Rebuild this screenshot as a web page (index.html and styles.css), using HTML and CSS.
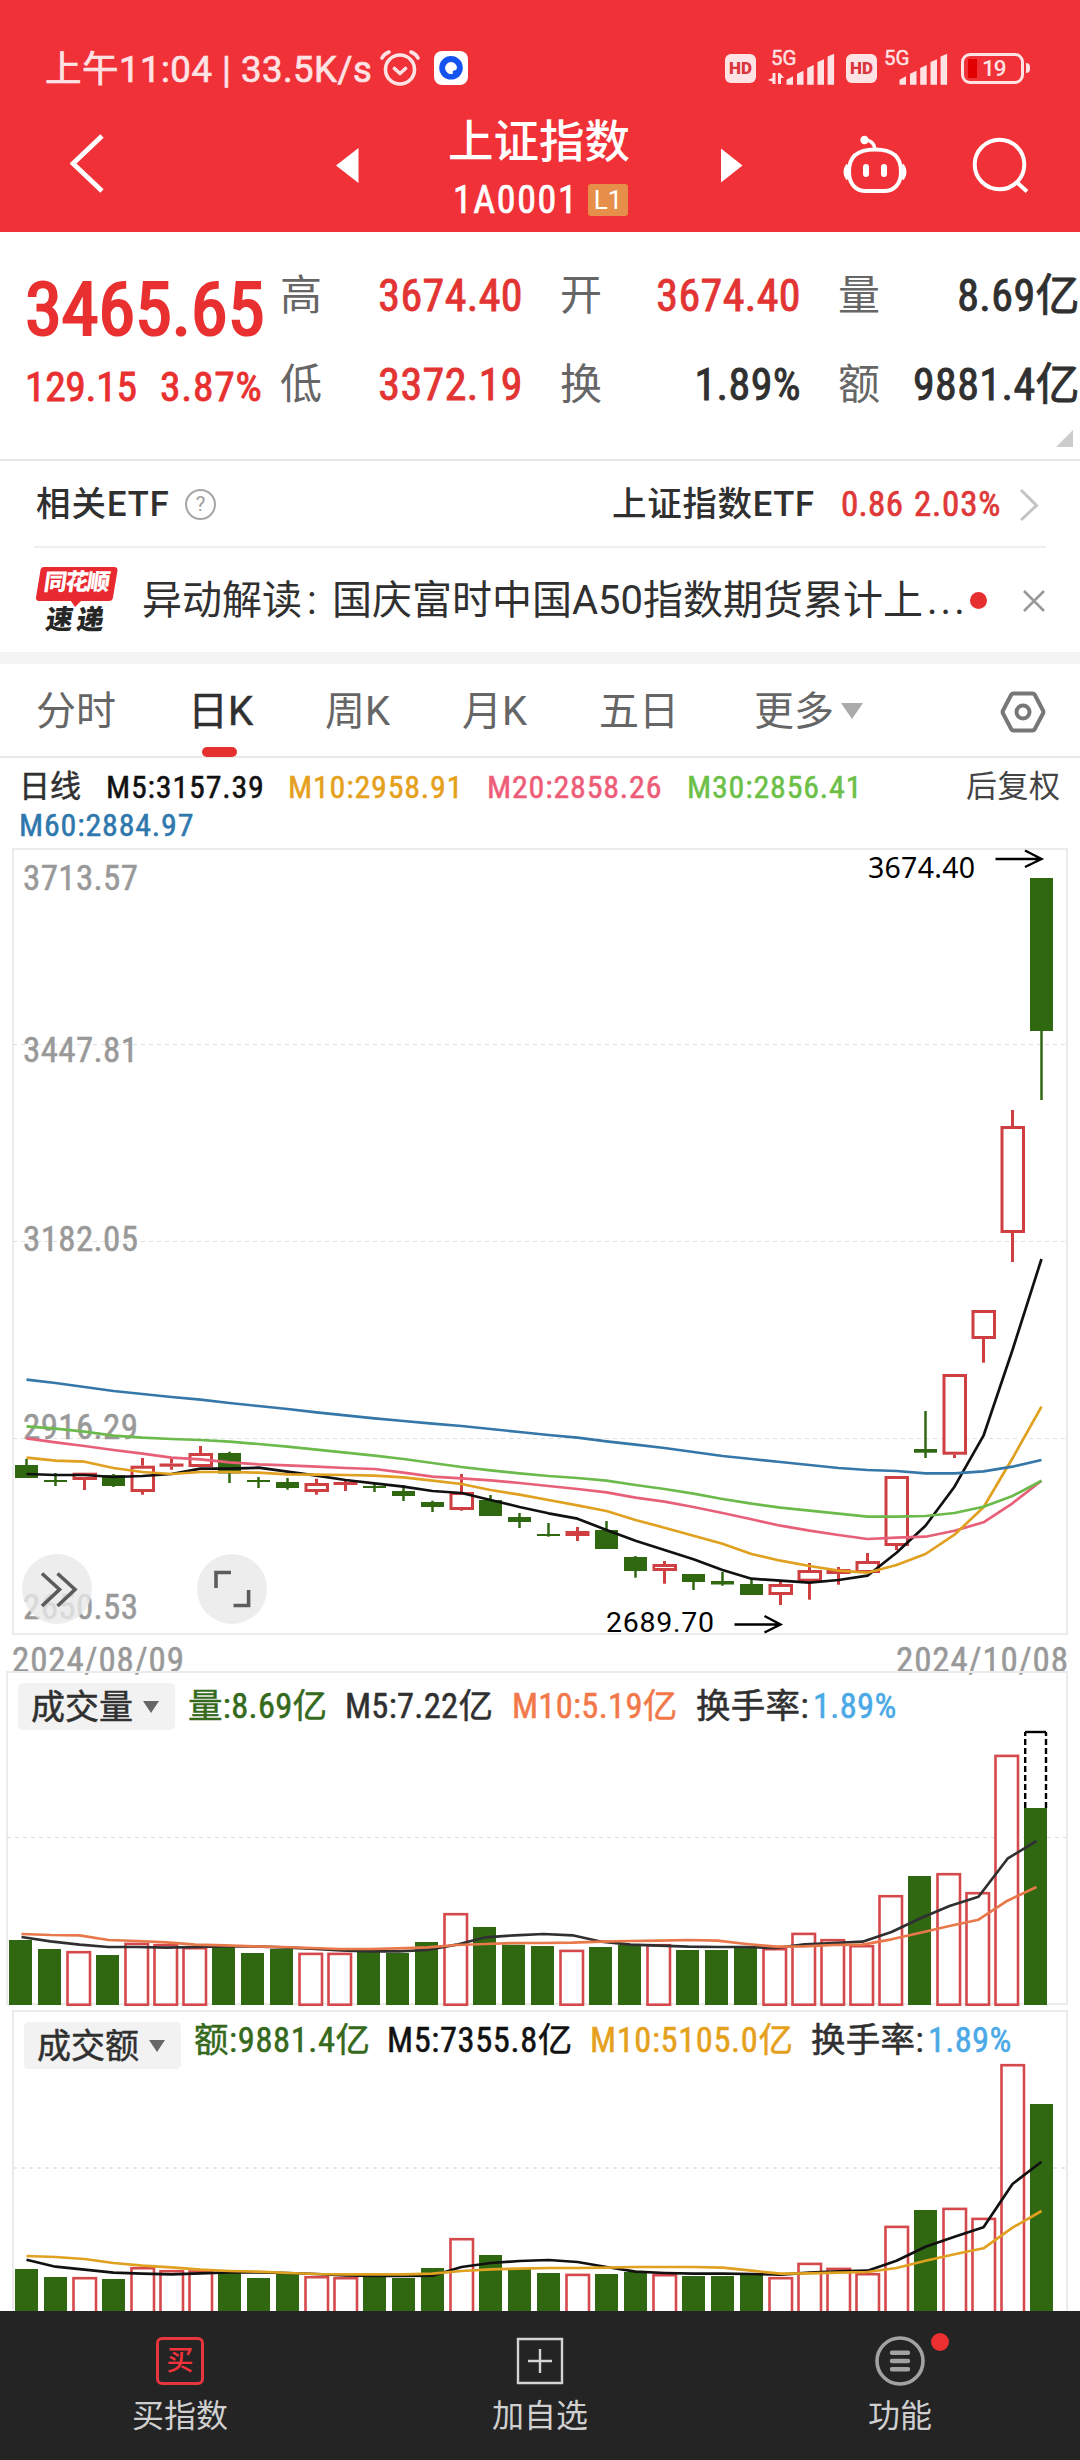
FILE: index.html
```html
<!DOCTYPE html>
<html lang="zh-CN">
<head>
<meta charset="utf-8">
<title>上证指数</title>
<link rel="stylesheet" href="styles.css">
</head>
<body>
<header class="top">
  <div class="status">
    <span class="clock">上午11:04 | 33.5K/s</span>
    <svg class="status-left" width="92" height="40" viewBox="378 50 92 40" fill="none">
      <g stroke="#ffe3e4" stroke-width="3.6" stroke-linecap="round" stroke-linejoin="round">
        <circle cx="400" cy="69.5" r="14.5"/>
        <path d="M394.500 68.500l5.500 5 5.500-5M382 58q2-4 7-6M418 58q-2-4-7-6"/>
      </g>
      <rect x="434" y="51" width="34" height="34" rx="8" fill="#fff"/>
      <circle cx="451" cy="67.800" r="11.800" fill="#1553ee"/>
      <path d="M451 62a6 6 0 1 0 2 11.700q-1-3 1-3.200 2.500 0 3-2.500a6 6 0 0 0-6-6z" fill="#fff"/>
    </svg>
    <span class="grow"></span>
    <span class="hd">HD</span>
    <span class="signal first">
      <b>5G</b>
      <svg width="68" height="36" viewBox="768 49 68 36" fill="#ffe3e4">
        <path d="M787.500 83.700v-5l6.500-3.500v8.500zM798 83.700v-11l6.500-3v14zM808.200 83.700V67l6.500-3v19.700zM818.500 83.700V61l6.500-2.800v25.500zM828.600 83.700V55.500l6.500-2.800v31z"/>
        <path d="M773.500 72h3v11h-3v-2.500l-5-1.500 5-2zM779 72h2l4 5h-3v6h-3z"/>
      </svg>
    </span>
    <span class="hd">HD</span>
    <span class="signal second">
      <b>5G</b>
      <svg width="68" height="36" viewBox="768 49 68 36" fill="#ffe3e4">
        <path d="M787.500 83.700v-5l6.500-3.500v8.500zM798 83.700v-11l6.500-3v14zM808.200 83.700V67l6.500-3v19.700zM818.500 83.700V61l6.500-2.800v25.500zM828.600 83.700V55.500l6.500-2.800v31z"/>
      </svg>
    </span>
    <span class="battery"><i></i><em>19</em></span>
    <span class="nub"></span>
  </div>
  <nav class="titlebar">
    <svg class="back" width="36" height="64" viewBox="70 132 36 64" fill="none" stroke="#fff" stroke-width="4.800"><path d="M102 136L73 163.500 102 191"/></svg>
    <svg class="prev" width="24" height="38" viewBox="335 147 24 38" fill="#fff"><path d="M336 165.500L358.500 148v35z"/></svg>
    <div class="name">
      <h1>上证指数</h1>
      <p><span>1A0001</span><b>L1</b></p>
    </div>
    <svg class="next" width="24" height="38" viewBox="720 147 24 38" fill="#fff"><path d="M742.500 165.500L721 148.500v34z"/></svg>
    <svg class="robot" width="68" height="62" viewBox="841 134 68 62" fill="none" stroke="#fff">
      <circle cx="864.500" cy="140" r="4.200" fill="#fff" stroke="none"/>
      <path d="M865 140q9 .500 10 9" stroke-width="3.600"/>
      <path d="M875 149.500c19 0 26 8 26 22 0 13-7 19.500-17 19.500h-18c-10 0-17-6.500-17-19.500 0-14 7-22 26-22z" stroke-width="4"/>
      <path d="M848 165q-5 7 0 14M902 165q5 7 0 14" stroke-width="4"/>
      <path d="M866 167v7M884 167v7" stroke-width="6" stroke-linecap="round"/>
    </svg>
    <svg class="search" width="60" height="60" viewBox="971 136 60 60" fill="none" stroke="#fff" stroke-width="4"><circle cx="999.500" cy="164.500" r="24.800"/><path d="M1016.500 182l10.500 9.500"/></svg>
  </nav>
</header>

<section class="quote">
  <div class="last">
    <strong>3465.65</strong>
    <p><span>129.15</span><span>3.87%</span></p>
  </div>
  <dl class="stats">
    <dt>高</dt><dd class="up">3674.40</dd><dt>开</dt><dd class="up">3674.40</dd><dt>量</dt><dd>8.69亿</dd>
    <dt>低</dt><dd class="up">3372.19</dd><dt>换</dt><dd>1.89%</dd><dt>额</dt><dd>9881.4亿</dd>
  </dl>
  <i class="corner"></i>
</section>

<section class="etf">
  <span class="etf-title">相关ETF</span><span class="help">?</span>
  <span class="grow"></span>
  <span class="etf-name">上证指数ETF</span><span class="etf-price">0.86</span><span class="etf-pct">2.03%</span>
  <svg width="22" height="34" viewBox="1019 486 22 34" fill="none" stroke="#c4c4c4" stroke-width="3"><path d="M1021 488l15.500 15.500L1021 518"/></svg>
</section>

<section class="news">
  <div class="logo">
    <svg width="82" height="41" viewBox="0 0 82 41"><path d="M8 1h70q4 0 3.400 4l-4.500 27q-.6 3-4 3H45l-6 6-4-6H3q-3.500 0-3-3.500L4.500 4Q5 1 8 1z" fill="#e8292f"/></svg>
    <b>同花顺</b>
    <em>速递</em>
  </div>
  <p>异动解读<span class="colon">:</span>国庆富时中国A50指数期货累计上<span class="dots">...</span></p>
  <i class="dot"></i>
  <svg width="24" height="24" viewBox="0 0 24 24" stroke="#999" stroke-width="2.600"><path d="M2 2l20 20M22 2L2 22"/></svg>
</section>

<nav class="tabs">
  <span>分时</span><span class="active">日K</span><span>周K</span><span>月K</span><span>五日</span><span>更多<i></i></span>
  <svg width="48" height="48" viewBox="0 0 48 48" fill="none" stroke="#777" stroke-width="4" stroke-linejoin="round"><path d="M14.500 5.500h19q1.500 0 2.300 1.300L44 22.500q.8 1.500 0 3L35.800 41q-.8 1.500-2.300 1.500h-19q-1.500 0-2.300-1.500L4 25.500q-.8-1.500 0-3L12.200 6.800q.8-1.300 2.300-1.300z"/><circle cx="24" cy="24" r="6.500"/></svg>
</nav>

<section class="ma">
  <span class="period">日线</span><span class="m5">M5:3157.39</span><span class="m10">M10:2958.91</span><span class="m20">M20:2858.26</span><span class="m30">M30:2856.41</span><span class="adjust">后复权</span>
  <span class="m60">M60:2884.97</span>
</section>

<section class="panel kline">
  <svg id="kline" width="1080" height="823" viewBox="0 848 1080 823"></svg>
</section>

<section class="panel volume">
  <svg id="volume" width="1080" height="339" viewBox="0 1671 1080 339"></svg>
  <div class="legend">
    <span class="chip">成交量<i></i></span>
    <span class="v1">量:8.69亿</span><span class="v2">M5:7.22亿</span><span class="v3">M10:5.19亿</span><span class="v4">换手率:</span><span class="v5">1.89%</span>
  </div>
</section>

<section class="panel amount">
  <svg id="amount" width="1080" height="301" viewBox="0 2010 1080 301"></svg>
  <div class="legend">
    <span class="chip">成交额<i></i></span>
    <span class="v1">额:9881.4亿</span><span class="v2">M5:7355.8亿</span><span class="v3">M10:5105.0亿</span><span class="v4">换手率:</span><span class="v5">1.89%</span>
  </div>
</section>

<footer class="bottom">
  <div><span class="buy">买</span><p>买指数</p></div>
  <div>
    <svg width="48" height="48" viewBox="0 0 48 48" fill="none" stroke="#d4d4d4" stroke-width="2.400"><path d="M2 2h44v44H2zM12 24h24M24 12v24"/></svg>
    <p>加自选</p>
  </div>
  <div>
    <svg width="50" height="50" viewBox="0 0 50 50" fill="none" stroke="#a2a2a2"><circle cx="25" cy="25" r="23" stroke-width="3.600"/><path d="M17 16.700h16M17 25h16M17 33.300h16" stroke-width="4.400" stroke-linecap="round"/></svg>
    <i class="badge"></i>
    <p>功能</p>
  </div>
</footer>
<script src="chart.js"></script>
</body>
</html>
```
FILE: styles.css
```css
* { box-sizing: border-box; }
body, h1, p, dl, dd { margin: 0; }
body {
  width: 1080px;
  height: 2460px;
  overflow: hidden;
  background: #fff;
  color: #303030;
  font-family: Roboto, "Noto Sans CJK SC", sans-serif;
  line-height: 1;
}
svg { display: block; flex: none; }
i, em { font-style: normal; }
h1, span, b, strong, dt, dd, p { white-space: nowrap; }
.grow { flex: 1; }

/* header */
.top { height: 232px; background: #f13138; color: #fff; }
.status { display: flex; align-items: flex-start; height: 100px; padding-top: 50px; }
.clock { width: 333px; margin-left: 45px; color: #ffe3e4; font-size: 36.5px; line-height: 40px; letter-spacing: .5px; -webkit-text-stroke: .7px #ffe3e4; }
.hd { display: flex; align-items: center; justify-content: center; width: 31px; height: 29px; margin-top: 4px; border-radius: 6px; background: #ffe3e4; color: #d8353c; font-size: 17px; font-weight: 900; }
.signal { display: grid; width: 68px; margin-left: 11px; margin-right: 11px; color: #ffe3e4; }
.signal > * { grid-area: 1 / 1; }
.signal b { margin-left: 4px; font-size: 20.5px; font-weight: 400; line-height: 16px; -webkit-text-stroke: .4px #ffe3e4; }
.signal.second { margin-left: 3px; margin-right: 13px; }
.battery { display: flex; align-items: center; width: 63px; height: 31px; margin-top: 3px; padding-left: 4px; border: 3px solid #ffe3e4; border-radius: 9px; }
.battery i { width: 9px; height: 19px; background: #e30000; }
.battery em { margin-left: 5px; color: #ffe3e4; font-size: 22.5px; font-weight: 500; letter-spacing: -1px; }
.nub { width: 4px; height: 10px; margin: 13px 50px 0 2px; border-radius: 0 4px 4px 0; background: #ffe3e4; }
.titlebar { display: flex; align-items: flex-start; height: 132px; }
.back { margin: 32px 0 0 70px; }
.prev { margin: 47px 0 0 229px; }
.name { width: 182px; margin: 16px 0 0 89px; }
.name h1 { font-size: 45.5px; font-weight: 500; line-height: 54px; }
.name p { display: flex; align-items: center; height: 33px; margin-top: 13px; padding-left: 5px; }
.name p span { width: 135px; font: 400 38px/1 "Roboto Condensed", sans-serif; letter-spacing: 1.6px; -webkit-text-stroke: .7px #fff; }
.name b { display: flex; align-items: center; justify-content: center; width: 40px; height: 32px; border-radius: 3px; background: #e58f4b; font-size: 26px; font-weight: 400; }
.next { margin: 47px 0 0 90px; }
.robot { margin: 34px 0 0 97px; }
.search { margin: 36px 0 0 62px; }

/* quote */
.quote { position: relative; display: flex; height: 229px; border-bottom: 2px solid #e8e8e8; font-family: "Roboto Condensed", "Noto Sans CJK SC", sans-serif; }
.last { width: 280px; padding: 38px 0 0 25px; color: #e93030; }
.last strong { display: block; font-size: 75px; font-weight: 400; line-height: 78px; letter-spacing: -.4px; -webkit-text-stroke: 2.2px #e93030; }
.last p { display: flex; font-size: 41.5px; line-height: 77px; letter-spacing: -.3px; -webkit-text-stroke: .9px #e93030; }
.last p span:first-child { width: 135px; }
.last p span:last-child { letter-spacing: .8px; }
.stats { display: grid; grid-template-columns: 42px 201px 80px 198px 80px 199px; grid-template-rows: 89px 89px; padding-top: 19px; align-items: center; }
.stats dt { color: #666; font-size: 42px; }
.stats dt:nth-of-type(3n+2), .stats dt:nth-of-type(3n) { margin-left: 37px; }
.stats dd { text-align: right; font-size: 44px; letter-spacing: .4px; -webkit-text-stroke: .9px #303030; }
.stats .up { color: #e33434; -webkit-text-stroke-color: #e33434; }
.corner { position: absolute; right: 7px; bottom: 12px; border-bottom: 17px solid #ccc; border-left: 17px solid transparent; }

/* etf */
.etf { display: flex; align-items: center; height: 87px; margin: 0 34px; border-bottom: 2px solid #efefef; padding-top: 2px; font-size: 34.5px; font-weight: 500; }
.etf-title { margin-left: 2px; letter-spacing: 1px; }
.help { display: flex; align-items: center; justify-content: center; width: 31px; height: 31px; margin-left: 15px; border: 2px solid #a6a6a6; border-radius: 50%; color: #a0a0a0; font-size: 21px; font-weight: 400; }
.etf-name { width: 229px; letter-spacing: .7px; }
.etf-price, .etf-pct { color: #df3838; font-family: "Roboto Condensed", sans-serif; font-size: 35px; font-weight: 400; letter-spacing: .3px; -webkit-text-stroke: .7px #df3838; }
.etf-price { width: 73px; }
.etf-pct { width: 105px; letter-spacing: .8px; }
.etf svg { margin-right: 5px; }

/* news */
.news { display: flex; align-items: center; height: 104px; padding-top: 1px; }
.logo { position: relative; width: 82px; height: 70px; margin: 0 24px 0 36px; }
.logo b { position: absolute; left: 8px; top: 5px; width: 66px; color: #fff; font-size: 23px; font-weight: 900; line-height: 24px; letter-spacing: -1.500px; transform: skewX(-8deg); }
.logo em { position: absolute; left: 10px; top: 40px; color: #262626; font-size: 27px; font-weight: 900; line-height: 28px; letter-spacing: 4px; transform: skewX(-8deg); }
.news p { width: 828px; font-size: 40px; }
.colon { display: inline-block; width: 30px; padding-left: 5px; }
.dots { letter-spacing: 3px; margin-left: 4px; }
.dot { width: 17px; height: 17px; margin-right: 35px; border-radius: 50%; background: #e6302f; }

/* tabs */
.tabs { display: flex; align-items: center; height: 106px; padding: 4px 0 0 36px; border-top: 12px solid #f4f4f4; border-bottom: 2px solid #e9e9e9; color: #666; font-size: 40px; }
.tabs span { position: relative; width: 137px; }
.tabs span:nth-child(1) { width: 152px; }
.tabs span:nth-child(5) { width: 155px; }
.tabs span:nth-child(6) { display: flex; align-items: center; width: 245px; }
.tabs .active { color: #303030; -webkit-text-stroke: .5px; }
.tabs .active::after { content: ""; position: absolute; left: 14px; top: 55px; width: 35px; height: 10px; border-radius: 5px; background: #e6302f; }
.tabs i { margin: -2px 0 0 7px; border-top: 16px solid #aaa; border-left: 11px solid transparent; border-right: 11px solid transparent; }
.tabs svg { margin-top: -1px; }

/* moving averages */
.ma { display: grid; grid-template-columns: 87px 182px 199px 200px 279px 1fr; grid-template-rows: 39px 37px; align-items: center; height: 90px; padding: 9px 0 0 19px; font-family: "Roboto Condensed", "Noto Sans CJK SC", sans-serif; font-size: 32px; letter-spacing: .8px; -webkit-text-stroke: .5px; }
.period { font-size: 31px; letter-spacing: 0; }
.adjust { color: #444; font-size: 31px; letter-spacing: .5px; -webkit-text-stroke: 0; }
.m5 { color: #111; }
.m10 { color: #e5a01c; }
.m20 { color: #ee5c78; }
.m30 { color: #6cbf47; }
.m60 { grid-column: 1 / 4; color: #2f78ad; }

/* chart panels */
.panel { display: grid; }
.panel > * { grid-area: 1 / 1; }
.kline svg { overflow: visible; }
.axis { fill: #999; font: 400 35px "Roboto Condensed", sans-serif; stroke: #999; stroke-width: .5; }
.mark { fill: #000; font: 400 28.500px "Noto Sans", sans-serif; }
.mark.low { font-family: Roboto, sans-serif; }
.legend { display: grid; align-content: start; align-items: center; font-family: "Roboto Condensed", "Noto Sans CJK SC", sans-serif; font-size: 34.5px; letter-spacing: .3px; -webkit-text-stroke: .5px; }
.volume .legend { grid-template-columns: 170px 157px 167px 184px 117px 1fr; padding: 12px 0 0 18px; }
.amount .legend { grid-template-columns: 170px 193px 203px 221px 117px 1fr; padding: 12px 0 0 24px; }
.amount .legend > span:not(.chip) { margin-top: -10px; }
.amount .legend > .v1, .amount .legend > .v2, .amount .legend > .v3 { letter-spacing: .6px; }
.chip { display: flex; align-items: center; width: 157px; height: 47px; padding-left: 13px; border-radius: 5px; background: #f2f2f2; color: #303030; font-size: 34px; letter-spacing: 0; }
.chip i { margin-left: 10px; border-top: 12px solid #666; border-left: 8.500px solid transparent; border-right: 8.500px solid transparent; }
.v1 { color: #35691c; }
.v2, .v4 { color: #303030; }
.v3 { color: #f2784a; }
.v5 { color: #4aa9e6; }
.amount .v2 { color: #111; }
.amount .v3 { color: #e5a01c; }

/* bottom bar */
.bottom { display: grid; grid-template-columns: repeat(3, 360px); height: 149px; background: #242424; color: #cfcfcf; font-size: 32px; }
.bottom div { position: relative; display: grid; justify-items: center; grid-template-rows: 50px 60px; padding-top: 25px; align-items: center; align-content: start; }
.buy { display: flex; align-items: center; justify-content: center; width: 48px; height: 48px; border: 3px solid #e8363f; border-radius: 6px; color: #f2323c; font-size: 27px; font-weight: 500; }
.badge { position: absolute; left: 211px; top: 22px; width: 18px; height: 18px; border-radius: 50%; background: #ec2f31; }
```
FILE: chart.js
```js
const NS = 'http://www.w3.org/2000/svg';
const RED = '#cf3f42', GREEN = '#306812', STEP = 29;

function add(svg, tag, attrs, text) {
  const el = document.createElementNS(NS, tag);
  for (const k in attrs) el.setAttribute(k, attrs[k]);
  if (text) el.textContent = text;
  svg.appendChild(el);
}
function frame(svg, x, y, w, h) {
  add(svg, 'rect', { x, y, width: w, height: h, fill: 'none', stroke: '#ebebeb', 'stroke-width': 2 });
}
function grid(svg, x, y, w, color) {
  add(svg, 'path', { d: `M${x} ${y}H1067`, stroke: color || '#dedede', 'stroke-width': w || 1.2, 'stroke-dasharray': '4 4' });
}
function line(svg, x0, ys, color) {
  const pts = ys.map((y, i) => `${x0 + i * STEP},${y}`).join(' ');
  add(svg, 'polyline', { points: pts, fill: 'none', stroke: color, 'stroke-width': 2.7, 'stroke-linejoin': 'round' });
}
function bars(svg, x0, tops, bottom) {
  tops.forEach((t, i) => {
    const x = x0 + i * STEP, up = t < 0, y = Math.abs(t);
    if (up) add(svg, 'rect', { x: x - 11, y: y + 1.2, width: 22.5, height: bottom - y - 1.5, fill: '#fff', stroke: '#d5484b', 'stroke-width': 2.6 });
    else add(svg, 'rect', { x: x - 11.5, y, width: 23, height: bottom - y, fill: GREEN });
  });
}

/* kind, body top, body bottom, high, low */
const candles = [
  ['g',1465,1478,1459,1478],['g',1480,1482,1473,1486],['r',1472.7,1480,1472.7,1490],['g',1475,1486,1474,1487],
  ['r',1465.7,1492,1458,1494.7],['r',1463.5,1466.7,1457,1469.7],['r',1453,1467,1446,1467],['g',1453,1473.5,1451.7,1483],
  ['g',1480,1482,1477,1488],['g',1482,1488,1478,1489.7],['r',1483,1492,1478.7,1494.7],['r',1482,1485,1480,1491],
  ['g',1486,1488,1484,1492],['g',1491,1496,1485,1501],['g',1502,1507,1500.7,1512],['r',1492,1510,1474,1510.7],
  ['g',1500,1516,1495,1516],['g',1517,1522,1513,1528],['g',1534,1536,1523,1536.7],['r',1531,1536,1527,1541],
  ['g',1530,1549,1521,1549],['g',1557,1571,1556,1577.7],['r',1564,1571,1561,1583.7],['g',1574,1582,1574,1590],
  ['g',1581,1584.5,1572,1585.7],['g',1584,1595,1578.7,1595],['r',1584,1595,1581.7,1605],['r',1570,1581.7,1563,1599.7],
  ['r',1569,1574,1567,1584.7],['r',1561,1573,1553,1573],['r',1476,1546,1476,1550],['g',1449,1452.7,1411,1458],
  ['r',1374,1454.7,1374,1458],['r',1310,1339,1310,1362.7],['r',1126,1233,1110,1262],['g',878,1031,878,1100]
];
const k = document.getElementById('kline');
frame(k, 13, 849, 1054, 785);
[1044.5, 1241.5, 1438.5].forEach(y => grid(k, 13, y));
[['3713.57', 890], ['3447.81', 1062], ['3182.05', 1250.5], ['2916.29', 1438.5], ['2650.53', 1618.5]]
  .forEach(([t, y]) => add(k, 'text', { x: 23, y, textLength: 115, class: 'axis' }, t));
candles.forEach(([c, top, bot, hi, lo], i) => {
  const x = 26.5 + i * STEP;
  if (c === 'g') {
    add(k, 'rect', { x: x - 1.25, y: hi, width: 2.5, height: lo - hi, fill: GREEN });
    add(k, 'rect', { x: x - 11.5, y: top, width: 23, height: bot - top, fill: GREEN });
  } else {
    if (hi < top) add(k, 'rect', { x: x - 1.5, y: hi, width: 3, height: top - hi, fill: RED });
    if (lo > bot) add(k, 'rect', { x: x - 1.5, y: bot, width: 3, height: lo - bot, fill: RED });
    const h = bot - top;
    if (h < 6) add(k, 'rect', { x: x - 12, y: top, width: 24, height: h, fill: RED });
    else add(k, 'rect', { x: x - 10.5, y: top + 1.5, width: 21.5, height: h - 3, fill: '#fff', stroke: RED, 'stroke-width': 3 });
  }
});
line(k, 26.5, [1474,1475,1475,1477,1476,1474,1468.7,1468.7,1467.7,1471.7,1475.7,1480,1483.3,1486.7,1491,1493,1500,1507,1513.3,1518.7,1530,1540.7,1550,1559.3,1570,1578.7,1580.7,1582.7,1580,1575.7,1552.7,1525.7,1486.7,1435.7,1350,1259], '#111');
line(k, 26.5, [1438.3,1442.3,1446,1450,1453.7,1457.7,1459.3,1462.3,1464.3,1465.3,1466.7,1468,1469,1472.7,1476.7,1478.3,1480.3,1483,1486,1489,1492.3,1497.7,1501.7,1507,1513,1519.3,1525.7,1530.7,1535,1539,1537.7,1536.7,1530.7,1522.3,1503.3,1480.7], '#e85f78');
line(k, 26.5, [1457.7,1460.7,1461.7,1468,1472,1474,1472,1472,1472.7,1474.3,1474.7,1475,1475.7,1477.3,1480.7,1484,1490,1494.7,1500,1505.3,1511,1520,1527.7,1535.7,1543.7,1554,1560.7,1566,1570.7,1572.7,1565,1554,1534.7,1507.3,1458.3,1406.7], '#e0a020');
line(k, 26.5, [1426.3,1428.7,1431.7,1435.7,1437.7,1439,1440,1441.7,1444,1446.7,1449.7,1452.7,1455.7,1459,1463,1467,1470.3,1473.3,1476,1478,1480.7,1485,1489,1493.7,1499,1503.7,1507.7,1510.7,1513.7,1516.7,1516.7,1516,1513,1506.7,1496,1480.7], '#6dba4c');
line(k, 26.5, [1379.7,1383,1387,1391,1394,1397,1399.7,1403,1406,1409,1412.3,1415.3,1418.3,1421,1423.7,1426,1429,1432,1435,1437.7,1441.3,1444.7,1448,1452,1456,1459,1462,1465,1468,1470,1471,1473.3,1473.3,1471.3,1466.7,1460], '#3577a8');
add(k, 'text', { x: 868, y: 878, textLength: 107, class: 'mark' }, '3674.40');
add(k, 'path', { d: 'M995.500 859H1041M1025 850.500L1041.500 859 1025 867', fill: 'none', stroke: '#000', 'stroke-width': 2.4 });
add(k, 'text', { x: 606, y: 1631.7, textLength: 108, class: 'mark low' }, '2689.70');
add(k, 'path', { d: 'M734.500 1624.500H780M764.500 1616L780.500 1624.500 764.500 1632.500', fill: 'none', stroke: '#000', 'stroke-width': 2.4 });
[57, 232].forEach(cx => add(k, 'circle', { cx, cy: 1589, r: 35, fill: '#e9e9e9', 'fill-opacity': .8 }));
add(k, 'path', { d: 'M42 1573.500L59.500 1589.500 42 1606M57.500 1573.500L75 1589.500 57.500 1606M216 1588V1572.500H231M233.500 1605.500H248.600V1590', fill: 'none', stroke: '#5c5c5c', 'stroke-width': 3.6 });
add(k, 'text', { x: 12, y: 1671.5, textLength: 172, class: 'axis' }, '2024/08/09');
add(k, 'text', { x: 896, y: 1671.5, textLength: 172, class: 'axis' }, '2024/10/08');

/* negative tops mark rising days */
const v = document.getElementById('volume');
frame(v, 7, 1672, 1060, 332);
grid(v, 7, 1837.5);
bars(v, 20.5, [1940,1949,-1951,1955,-1942.7,-1944,-1947,1947,1953,1949,-1952.7,-1952.7,1951.7,1953,1942,-1913,1927,1944.7,1946,-1949.7,1947,1945,-1944,1950,1950,1947,-1948,-1932.7,-1939,-1945,-1895,1876,-1873,-1892,-1754.7,1808], 2005);
add(v, 'path', { d: 'M1025.200 1808V1732M1046 1808V1732', fill: 'none', stroke: '#000', 'stroke-width': 2.4, 'stroke-dasharray': '6 3' });
add(v, 'path', { d: 'M1025 1732H1046', stroke: '#000', 'stroke-width': 2.4 });
line(v, 21.5, [1937,1941.3,1944.7,1947,1947,1947.7,1947,1946.3,1946.3,1947.3,1948.7,1950.3,1951.3,1951.3,1950,1944.7,1937.3,1935.3,1934,1935.3,1941.7,1944.7,1945.7,1946.7,1947,1947,1948,1944.3,1943,1941.7,1932,1918.3,1906,1896.7,1858.7,1841], '#303030');
line(v, 21.5, [1934,1935,1935.3,1940,1941,1942.3,1944.7,1945.3,1946.3,1947,1948,1949,1949,1948.3,1947.3,1945,1944,1943,1943,1942.7,1941.7,1941,1940.7,1940,1940.7,1944,1946.7,1946.3,1945,1944.7,1939.3,1932.7,1926,1919.7,1900.7,1887], '#e8784a');

const a = document.getElementById('amount');
frame(a, 13, 2011, 1054, 330);
grid(a, 13, 2168, 2, '#e9e9e9');
bars(a, 26.5, [2269,2277,-2277,2279,-2267,-2270,-2270.3,2273,2278,2274,-2276,-2277,2277,2278,2268,-2238,2255,2269,2273,-2273.7,2274,2272,-2274,2276,2276,2275,-2277,-2262.7,-2267.7,-2273,-2225.7,2210,-2207.7,-2217.7,-2064,2104], 2341);
line(a, 26.5, [2259.7,2266.7,2269.7,2272.7,2273.7,2274.3,2273.3,2272.3,2272.3,2273,2274,2275.3,2276,2276,2275.7,2267,2263,2261,2260,2262,2267,2271.7,2273,2273.7,2273.7,2274,2274.7,2272.7,2271.3,2270.7,2260.7,2246.7,2236.7,2227.3,2184,2161.7], '#111');
line(a, 26.5, [2256,2257,2259,2263,2265.7,2267.3,2269.7,2271,2271.7,2273,2274,2274.3,2274.3,2274.3,2273.7,2271,2269.3,2268.7,2268,2268,2267.7,2267,2267,2267,2267.7,2270.7,2273.7,2273.3,2272.7,2272,2268,2260.7,2254.3,2248.3,2227.7,2211], '#e0a020');
```
